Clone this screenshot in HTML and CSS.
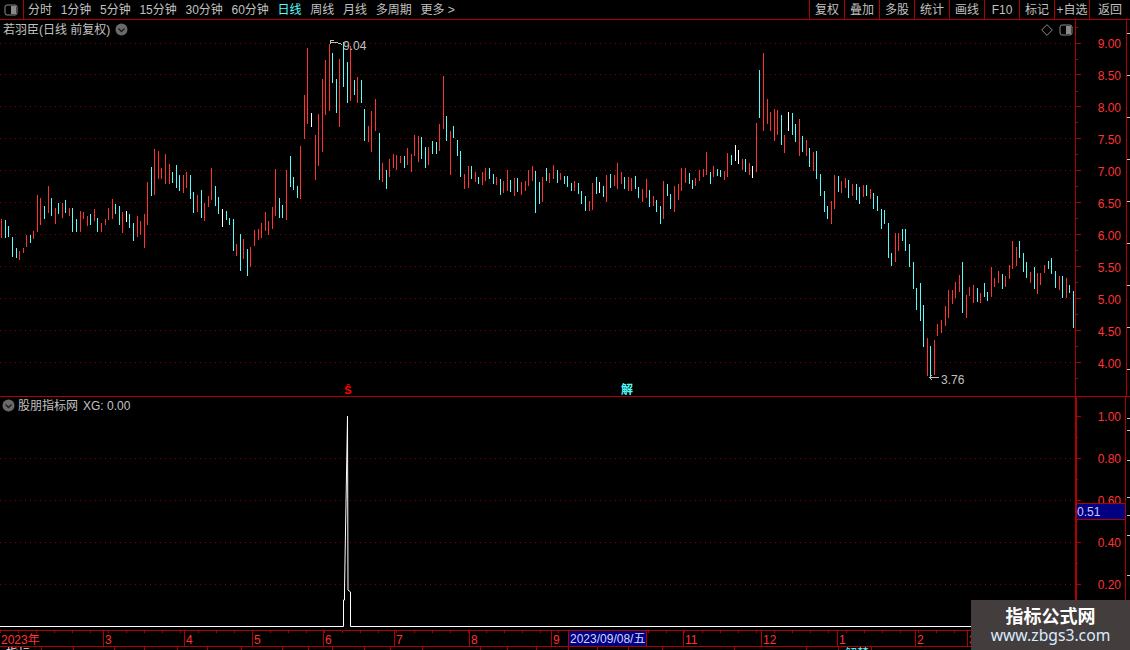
FILE: index.html
```html
<!DOCTYPE html>
<html lang="zh-CN">
<head>
<meta charset="utf-8">
<title>若羽臣 日线</title>
<link rel="stylesheet" href="styles.css">
</head>
<body>
<div class="app">
  <nav class="toolbar">
    <div class="panel-toggle">
      <svg class="toggle-icon" width="14" height="12" viewBox="0 0 14 12"><rect x="1" y="1" width="12" height="10" rx="2" class="ti-box"/><rect x="7" y="2" width="5" height="8" class="ti-fill"/></svg>
    </div>
    <div class="periods">
      <span>分时</span><span>1分钟</span><span>5分钟</span><span>15分钟</span><span>30分钟</span><span>60分钟</span><span class="active">日线</span><span>周线</span><span>月线</span><span>多周期</span><span>更多 &gt;</span>
    </div>
    <div class="tools">
      <span>复权</span><span>叠加</span><span>多股</span><span>统计</span><span>画线</span><span>F10</span><span>标记</span><span>+自选</span><span>返回</span>
    </div>
  </nav>

  <section class="pane pane-price">
    <div class="pane-title">
      <span>若羽臣(日线 前复权)</span>
      <svg class="chev" width="13" height="13" viewBox="0 0 13 13"><circle cx="6.5" cy="6.5" r="6" class="chev-bg"/><path d="M3.5 5.5l3 3 3-3" class="chev-mark"/></svg>
    </div>
    <div class="pane-icons">
      <svg width="12" height="12" viewBox="0 0 12 12"><path d="M6 .7L11.3 6 6 11.3.7 6z" class="ti-box"/></svg>
      <svg class="toggle-icon" width="14" height="12" viewBox="0 0 14 12"><rect x="1" y="1" width="12" height="10" rx="2" class="ti-box"/><rect x="7" y="2" width="5" height="8" class="ti-fill"/></svg>
    </div>
    <svg class="chart" width="1130" height="376" viewBox="0 20 1130 376">
      <path class="grid" d="M0 43.5H1075M0 74.5H1075M0 106.5H1075M0 138.5H1075M0 170.5H1075M0 202.5H1075M0 234.5H1075M0 266.5H1075M0 298.5H1075M0 330.5H1075M0 362.5H1075"/>
      <path class="axis" d="M1075.5 20V396M1126.5 20V396"/>
      <path class="axis" d="M1075 43.5h6M1075 74.5h6M1075 106.5h6M1075 138.5h6M1075 170.5h6M1075 202.5h6M1075 234.5h6M1075 266.5h6M1075 298.5h6M1075 330.5h6M1075 362.5h6M1075 27.5h3M1075 59.5h3M1075 91.5h3M1075 122.5h3M1075 154.5h3M1075 186.5h3M1075 218.5h3M1075 250.5h3M1075 282.5h3M1075 314.5h3M1075 346.5h3M1075 378.5h3"/>
      <path class="side-ticks" d="M1127 33.5h3M1127 75.5h3M1127 117.5h3M1127 159.5h3M1127 201.5h3M1127 243.5h3M1127 285.5h3M1127 327.5h3M1127 369.5h3"/>
      <path class="bar-red" d="M1.5 219V238M19.5 251V260M23.5 248V253M26.5 235V247M33.5 231V239M37.5 195V232M40.5 198V225M48.5 186V213M55.5 208V224M62.5 203V218M69.5 208V216M80.5 211V232M83.5 212V219M87.5 216V226M94.5 209V221M101.5 223V232M105.5 219V225M108.5 208V220M112.5 199V219M122.5 212V233M137.5 216V237M140.5 221V235M144.5 214V248M147.5 182V225M154.5 149V195M158.5 151V179M161.5 168V179M165.5 154V184M169.5 164V184M183.5 175V193M186.5 172V188M197.5 195V212M204.5 203V221M208.5 196V207M211.5 168V200M236.5 244V256M243.5 239V259M250.5 247V267M254.5 230V246M258.5 229V240M261.5 223V238M265.5 212V231M268.5 221V235M272.5 207V229M275.5 169V216M286.5 170V220M300.5 146V199M304.5 95V139M307.5 48V124M315.5 135V180M318.5 114V166M322.5 79V152M325.5 60V115M329.5 44V111M339.5 59V127M350.5 46V101M357.5 77V103M368.5 126V142M371.5 111V152M375.5 99V131M382.5 163V182M389.5 159V177M393.5 154V168M396.5 155V170M400.5 156V163M407.5 148V165M411.5 154V172M414.5 135V156M418.5 136V162M428.5 147V165M439.5 124V151M443.5 76V129M450.5 131V175M464.5 174V189M468.5 166V188M475.5 172V182M482.5 172V185M485.5 168V181M496.5 177V185M503.5 181V193M507.5 170V191M514.5 178V196M521.5 182V195M525.5 181V191M528.5 170V186M532.5 166V181M542.5 177V202M549.5 173V183M553.5 165V179M560.5 173V180M574.5 181V191M589.5 201V211M592.5 183V210M606.5 175V202M614.5 175V186M617.5 163V189M621.5 172V184M628.5 177V191M631.5 178V191M642.5 189V202M646.5 179V198M653.5 196V206M663.5 181V219M674.5 186V212M678.5 184V200M681.5 168V191M685.5 168V183M695.5 178V186M699.5 170V181M703.5 169V177M706.5 152V175M713.5 166V177M724.5 171V180M727.5 153V177M742.5 159V170M749.5 163V175M756.5 123V172M763.5 53V131M767.5 99V124M770.5 112V131M774.5 109V141M777.5 110V135M784.5 135V153M799.5 119V156M806.5 140V156M813.5 152V171M831.5 201V224M834.5 175V209M841.5 181V193M845.5 178V188M852.5 184V196M863.5 185V197M870.5 189V199M895.5 233V262M898.5 233V251M927.5 338V376M934.5 340V375M937.5 324V336M941.5 320V333M945.5 306V326M948.5 290V318M952.5 290V304M955.5 282V298M959.5 275V292M966.5 295V318M969.5 287V296M973.5 285V303M980.5 293V303M991.5 267V297M994.5 278V287M998.5 271V283M1005.5 276V287M1009.5 265V279M1012.5 241V269M1016.5 247V266M1030.5 272V283M1037.5 273V294M1040.5 273V285M1044.5 265V273M1059.5 276V290M1066.5 278V298"/>
      <path class="bar-cyan" d="M5.5 220V238M8.5 226V237M12.5 237V257M16.5 248V258M30.5 235V243M44.5 206V219M51.5 198V216M58.5 203V214M65.5 200V213M72.5 208V232M76.5 219V232M90.5 214V225M97.5 218V232M115.5 204V214M119.5 206V225M129.5 214V228M133.5 223V241M151.5 167V196M172.5 172V183M176.5 165V188M179.5 175V191M190.5 175V199M193.5 192V213M201.5 190V218M215.5 186V206M218.5 197V214M226.5 211V220M229.5 218V225M233.5 219V251M240.5 234V271M247.5 249V276M279.5 198V218M282.5 205V218M290.5 156V187M293.5 177V190M297.5 186V198M332.5 53V83M336.5 79V113M343.5 42V87M347.5 62V103M354.5 80V95M361.5 80V103M364.5 109V141M379.5 133V180M386.5 170V189M404.5 156V168M421.5 137V159M425.5 147V168M432.5 141V154M436.5 142V154M446.5 116V141M453.5 126V138M457.5 140V156M460.5 151V177M471.5 166V179M478.5 177V184M489.5 168V179M493.5 174V184M500.5 179V195M510.5 180V192M517.5 178V192M535.5 171V213M539.5 182V204M546.5 168V181M557.5 170V183M564.5 176V184M567.5 176V187M571.5 183V191M578.5 183V194M581.5 191V204M585.5 196V211M596.5 177V194M603.5 186V197M610.5 174V188M624.5 177V189M635.5 176V189M638.5 187V198M649.5 190V207M656.5 200V212M660.5 206V224M667.5 184V196M670.5 194V209M689.5 173V184M692.5 180V189M710.5 172V184M717.5 169V176M720.5 170V177M731.5 155V165M745.5 159V172M759.5 70V118M781.5 115V145M792.5 113V135M795.5 124V142M802.5 136V152M809.5 148V167M816.5 151V179M820.5 174V196M824.5 191V212M827.5 206V219M838.5 176V192M848.5 180V198M856.5 184V200M859.5 187V204M866.5 185V196M873.5 193V209M877.5 196V211M881.5 209V229M884.5 210V224M888.5 223V258M891.5 253V266M902.5 229V241M905.5 229V251M909.5 244V267M913.5 262V289M916.5 288V310M920.5 283V321M923.5 305V347M930.5 346V376M962.5 262V313M977.5 288V302M984.5 283V297M987.5 292V301M1002.5 274V289M1019.5 241V258M1023.5 253V272M1026.5 262V278M1034.5 267V289M1048.5 261V269M1051.5 258V274M1055.5 271V288M1062.5 276V298M1069.5 285V293M1073.5 291V328"/>
      <path class="bar-white" d="M126.5 211V222M222.5 209V227M311.5 113V127M599.5 182V193M735.5 145V161M738.5 150V164M752.5 166V178M788.5 112V131"/>
      <path class="marker" d="M330.5 44V40.5H334M330.5 42.5H333.5M334 42.5H337L342 44.5M930 377.5h9M929 377.5l3 -2M929 377.5l3 2"/>
      <text class="mark-text" x="343" y="50">9.04</text>
      <text class="mark-text" x="941" y="384">3.76</text>
      <text class="tick-red" x="1121" y="48">9.00</text>
      <text class="tick-red" x="1121" y="80">8.50</text>
      <text class="tick-red" x="1121" y="112">8.00</text>
      <text class="tick-red" x="1121" y="144">7.50</text>
      <text class="tick-red" x="1121" y="176">7.00</text>
      <text class="tick-red" x="1121" y="208">6.50</text>
      <text class="tick-red" x="1121" y="240">6.00</text>
      <text class="tick-red" x="1121" y="272">5.50</text>
      <text class="tick-red" x="1121" y="304">5.00</text>
      <text class="tick-red" x="1121" y="336">4.50</text>
      <text class="tick-red" x="1121" y="368">4.00</text>
      <text class="sig-buy" x="348" y="394">Ŝ</text>
      <text class="sig-sell" x="627" y="394">解</text>
    </svg>
  </section>

  <section class="pane pane-osc">
    <div class="pane-title pane-title-osc">
      <svg class="chev" width="13" height="13" viewBox="0 0 13 13"><circle cx="6.5" cy="6.5" r="6" class="chev-bg"/><path d="M3.5 5.5l3 3 3-3" class="chev-mark"/></svg>
      <span>股朋指标网</span>
      <span class="xg">XG: 0.00</span>
    </div>
    <svg class="chart" width="1130" height="233" viewBox="0 397 1130 233">
      <path class="grid" d="M0 458.5H1075M0 500.5H1075M0 542.5H1075M0 584.5H1075"/>
      <path class="axis axis-thick" d="M1076 397V630"/>
      <path class="axis" d="M1125.5 397V630"/>
      <path class="axis" d="M1075 416.5h6M1075 458.5h6M1075 500.5h6M1075 542.5h6M1075 584.5h6M1075 437.5h3M1075 479.5h3M1075 521.5h3M1075 563.5h3M1075 605.5h3"/>
      <path class="side-ticks" d="M1127 418.5h3M1127 430.5h3M1127 460.5h3M1127 497.5h3M1127 515.5h3M1127 535.5h3M1127 575.5h3"/>
      <text class="tick-red" x="1121" y="421">1.00</text>
      <text class="tick-red" x="1121" y="463">0.80</text>
      <text class="tick-red" x="1121" y="505">0.60</text>
      <text class="tick-red" x="1121" y="547">0.40</text>
      <text class="tick-red" x="1121" y="589">0.20</text>
      <rect class="value-box" x="1076.5" y="503.5" width="49" height="16"/>
      <text class="value-text" x="1077" y="516">0.51</text>
      <path class="spike" d="M0 626.5H343.5V600H344.5V590L347.5 416L348 590L350.5 592V626.5H1075"/>
    </svg>
  </section>

  <div class="dates">
    <span>2023年</span><span>3</span><span>4</span><span>5</span><span>6</span><span>7</span><span>8</span><span>9</span><span class="date-current">2023/09/08/五</span><span></span><span>11</span><span>12</span><span>1</span><span>2</span><span>3</span>
  </div>
  <div class="status">
    <span>指标</span><span></span><span></span><span></span><span></span><span></span><span></span><span></span><span></span><span></span><span></span><span></span><span></span><span></span><span></span><span></span><span></span><span></span><span></span><span></span><span></span><span></span><span></span><span class="status-cyan">解禁</span><span></span>
  </div>

  <aside class="watermark">
    <strong>指标公式网</strong>
    <span>www.zbgs3.com</span>
  </aside>
</div>
</body>
</html>
```
FILE: styles.css
```css
* { box-sizing: border-box; }
html, body { margin: 0; padding: 0; background: #000; }
body {
  font: 12px/1 "Liberation Sans", "Noto Sans CJK SC", sans-serif;
  color: #c0c0c0;
  overflow: hidden;
}
.app {
  position: relative;
  width: 1130px;
  height: 650px;
  overflow: hidden;
  display: flex;
  flex-direction: column;
  background: #000;
}

/* toolbar */
.toolbar {
  display: flex;
  height: 20px;
  flex: none;
  border-bottom: 1px solid #b00000;
}
.panel-toggle {
  width: 24px;
  border-right: 1px solid #b00000;
  display: flex;
  align-items: center;
  justify-content: center;
}
.periods {
  display: flex;
  align-items: center;
  gap: 8.7px;
  padding-left: 4px;
  width: 786px;
}
.periods .active { color: #54fcfc; }
.tools {
  display: grid;
  grid-template-columns: repeat(8, 35px) 41px;
  flex: 1;
}
.tools span {
  border-left: 1px solid #b00000;
  display: flex;
  align-items: center;
  justify-content: center;
  white-space: nowrap;
}
.ti-box { fill: none; stroke: #8a8a8a; stroke-width: 1; }
.ti-fill { fill: #8a8a8a; }

/* panes */
.pane { position: relative; flex: none; }
.pane-price { height: 377px; border-bottom: 1px solid #b00000; }
.pane-osc { height: 233px; }
.chart { display: block; shape-rendering: crispEdges; }
.pane-title {
  position: absolute;
  left: 3px;
  top: 3px;
  height: 13px;
  display: flex;
  align-items: center;
  gap: 5px;
}
.pane-title-osc { left: 2px; top: 2px; gap: 3px; }
.pane-title-osc .xg { margin-left: 2px; }
.pane-icons {
  position: absolute;
  top: 4px;
  right: 57px;
  display: flex;
  align-items: center;
  gap: 6px;
}
.chev { display: block; flex: none; }
.chev-bg { fill: #6a6a6a; shape-rendering: auto; }
.chev-mark { fill: none; stroke: #1a1a1a; stroke-width: 1.3; shape-rendering: auto; }

/* chart strokes */
.grid { fill: none; stroke: #8a0000; stroke-width: 1; stroke-dasharray: 1 4; shape-rendering: auto; }
.axis { fill: none; stroke: #b00000; stroke-width: 1; }
.axis-thick { stroke-width: 2; }
.side-ticks { fill: none; stroke: #c8c8c8; stroke-width: 1; }
.bar-red, .bar-cyan, .bar-white { fill: none; stroke-width: 1; }
.bar-red { stroke: #ff3232; }
.bar-cyan { stroke: #54fcfc; }
.bar-white { stroke: #fff; }
.marker { fill: none; stroke: #c0c0c0; stroke-width: 1; }
.mark-text { fill: #c0c0c0; font-size: 12px; }
.tick-red { fill: #ff3232; font-size: 12px; text-anchor: end; }
.sig-buy { fill: #ff0000; font-size: 11px; font-weight: 700; text-anchor: middle; }
.sig-sell { fill: #54fcfc; font-size: 12px; font-weight: 700; text-anchor: middle; }
.value-box { fill: #000080; stroke: #b00000; stroke-width: 1; }
.value-text { fill: #c8c8ff; font-size: 12px; }
.spike { fill: none; stroke: #fff; stroke-width: 1; shape-rendering: auto; }

/* date axis */
.dates {
  flex: none;
  height: 17px;
  display: grid;
  grid-template-columns: 104px 81px 68px 71px 71px 75px 82px 17px 78px 37px 78px 76px 78px 52px 1fr;
  border-top: 1px solid #b00000;
  border-bottom: 1px solid #b00000;
  color: #ff3232;
  background: repeating-linear-gradient(90deg, #b00000 0 1px, transparent 1px 18px) 0 0 / 100% 2px no-repeat;
}
.dates span {
  border-right: 1px solid #b00000;
  padding: 3px 0 0 1px;
  white-space: nowrap;
  overflow: hidden;
}
.dates .date-current {
  background: #000080;
  color: #d4d4ff;
  padding-top: 2px;
}

/* status strip, cut off by the window edge */
.status {
  flex: none;
  height: 3px;
  overflow: hidden;
  display: grid;
  grid-template-columns: 42px 32px 41px 30px 33px 30px 34px 41px 26px 24px 32px 26px 32px 58px 27px 29px 32px 29px 31px 34px 72px 72px 32px 33px 1fr;
  color: #e0e0e0;
}
.status span {
  border-right: 1px solid #b00000;
  padding: 1px 0 0 6px;
  white-space: nowrap;
}
.status .status-cyan { color: #54fcfc; }

/* watermark */
.watermark {
  position: absolute;
  left: 971px;
  top: 600px;
  width: 159px;
  height: 50px;
  background: #433d3d;
  display: flex;
  flex-direction: column;
  align-items: center;
  padding-top: 6px;
  gap: 3px;
}
.watermark strong {
  color: #fff;
  font: 700 18px/18px "Noto Sans CJK SC", sans-serif;
}
.watermark span {
  color: #d8ecff;
  font: 15.7px/17px "Noto Sans", sans-serif;
  white-space: nowrap;
}
```
